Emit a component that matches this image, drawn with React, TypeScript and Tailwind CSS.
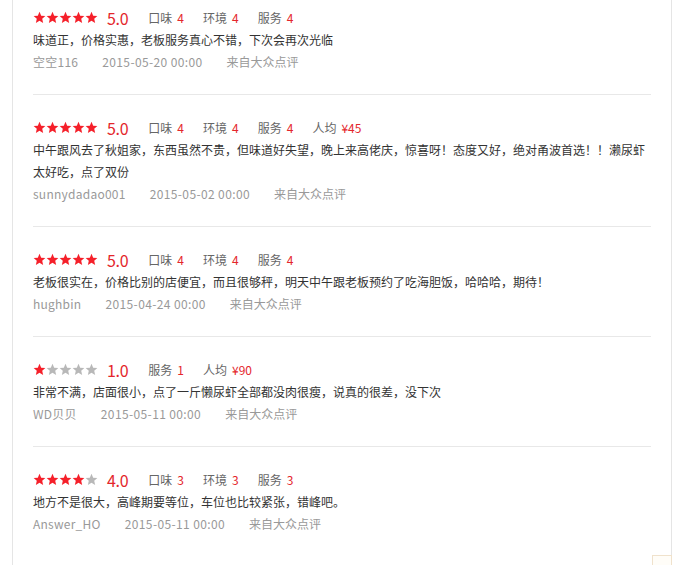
import React from "react";

type Review = {
  stars: number;
  score: string;
  tags: [string, string][];
  text: string;
  user: string;
  date: string;
};

const reviews: Review[] = [
  {
    stars: 5,
    score: "5.0",
    tags: [["口味", "4"], ["环境", "4"], ["服务", "4"]],
    text: "味道正，价格实惠，老板服务真心不错，下次会再次光临",
    user: "空空116",
    date: "2015-05-20 00:00",
  },
  {
    stars: 5,
    score: "5.0",
    tags: [["口味", "4"], ["环境", "4"], ["服务", "4"], ["人均", "¥45"]],
    text: "中午跟风去了秋姐家，东西虽然不贵，但味道好失望，晚上来高佬庆，惊喜呀！态度又好，绝对甬波首选！！濑尿虾太好吃，点了双份",
    user: "sunnydadao001",
    date: "2015-05-02 00:00",
  },
  {
    stars: 5,
    score: "5.0",
    tags: [["口味", "4"], ["环境", "4"], ["服务", "4"]],
    text: "老板很实在，价格比别的店便宜，而且很够秤，明天中午跟老板预约了吃海胆饭，哈哈哈，期待！",
    user: "hughbin",
    date: "2015-04-24 00:00",
  },
  {
    stars: 1,
    score: "1.0",
    tags: [["服务", "1"], ["人均", "¥90"]],
    text: "非常不满，店面很小，点了一斤懒尿虾全部都没肉很瘦，说真的很差，没下次",
    user: "WD贝贝",
    date: "2015-05-11 00:00",
  },
  {
    stars: 4,
    score: "4.0",
    tags: [["口味", "3"], ["环境", "3"], ["服务", "3"]],
    text: "地方不是很大，高峰期要等位，车位也比较紧张，错峰吧。",
    user: "Answer_HO",
    date: "2015-05-11 00:00",
  },
];

function Star({ on }: { on: boolean }) {
  return (
    <svg width="13" height="13" viewBox="0 0 24 24" className={on ? "text-[#f5202a]" : "text-[#b8b8b8]"}>
      <path
        fill="currentColor"
        d="M12 1.5l3.1 7.1 7.7.7-5.8 5.1 1.7 7.6L12 18l-6.7 4 1.7-7.6-5.8-5.1 7.7-.7z"
      />
    </svg>
  );
}

function ReviewItem({ r, first, last }: { r: Review; first: boolean; last: boolean }) {
  return (
    <div className={`${first ? "pt-[6px]" : "pt-[21px]"} pb-[21px] ${last ? "" : "border-b border-[#e8e8e8]"}`}>
      <div className="flex items-center h-[23px]">
        <div className="flex">
          {[0, 1, 2, 3, 4].map((i) => (
            <Star key={i} on={i < r.stars} />
          ))}
        </div>
        <span className="ml-[9px] mr-[20px] text-[16px] tracking-[-0.3px] text-[#e4262c]">{r.score}</span>
        {r.tags.map(([k, v]) => (
          <span key={k} className="mr-[19px] text-[12px] text-[#666]">
            {k}
            <span className="ml-[5px] text-[#e4262c]">{v}</span>
          </span>
        ))}
      </div>
      <p className="text-[12px] leading-[22px] text-[#333]">{r.text}</p>
      <div className="flex text-[12px] leading-[22px] text-[#999]">
        <span className="mr-[24px] tracking-[0.25px]">{r.user}</span>
        <span className="mr-[24px] tracking-[0.38px]">{r.date}</span>
        <span>来自大众点评</span>
      </div>
    </div>
  );
}

export default function App() {
  return (
    <div
      className="relative h-[565px] overflow-hidden bg-white"
      style={{ fontFamily: '"Microsoft YaHei", "Noto Sans CJK SC", sans-serif' }}
    >
      <div className="ml-[12px] w-[660px] h-full border-l border-r border-[#e5e5e5] pl-[20px] pr-[20px]">
        {reviews.map((r, i) => (
          <ReviewItem key={i} r={r} first={i === 0} last={i === reviews.length - 1} />
        ))}
      </div>
      <div className="absolute left-[652px] top-[555px] w-[20px] h-[20px] border border-[#f0e2cc] bg-[#fffdf8]" />
    </div>
  );
}
